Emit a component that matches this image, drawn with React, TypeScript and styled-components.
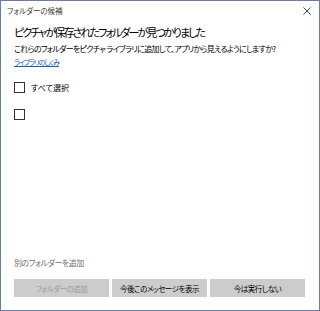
import React from "react";
import styled, { createGlobalStyle } from "styled-components";

const Global = createGlobalStyle`
  html, body { margin: 0; padding: 0; background: #ffffff; }
  body { font-family: "Noto Sans CJK JP", "Noto Sans", sans-serif; font-feature-settings: "palt" 1; }
  * { box-sizing: border-box; }
`;

const Window = styled.div`
  width: 320px;
  height: 311px;
  border: 1px solid #6a7da3;
  background: #ffffff;
  display: flex;
  flex-direction: column;
`;

const TitleBar = styled.div`
  height: 19px;
  display: flex;
  align-items: center;
  justify-content: space-between;
  padding: 0 8px 0 6px;
`;

const TitleText = styled.span`
  font-size: 7.5px;
  color: #3a3a3a;
  line-height: 1;
`;

const Content = styled.div`
  flex: 1;
  display: flex;
  flex-direction: column;
  padding: 4px 13px 13px 13px;
`;

const Heading = styled.h1`
  margin: 0;
  font-size: 11px;
  font-weight: 400;
  line-height: 16px;
  color: #000000;
  letter-spacing: -1.9px;
  white-space: nowrap;
`;

const Sub = styled.p`
  margin: 3px 0 0 0;
  font-size: 8px;
  line-height: 12px;
  color: #000000;
  letter-spacing: -0.7px;
  white-space: nowrap;
`;

const Link = styled.a`
  margin-top: 1px;
  font-size: 7px;
  line-height: 12px;
  color: #1a5fb4;
  text-decoration: underline;
  letter-spacing: -1.1px;
  align-self: flex-start;
`;

const CheckRow = styled.label<{ $top: number }>`
  display: flex;
  align-items: center;
  gap: 6px;
  margin-top: ${(p) => p.$top}px;
  height: 11px;
  font-size: 8px;
  color: #000000;
`;

const Box = styled.span`
  width: 11px;
  height: 11px;
  border: 1.5px solid #333333;
  background: #ffffff;
  flex: none;
`;

const Spacer = styled.div`
  flex: 1;
`;

const AddLabel = styled.div`
  font-size: 8px;
  line-height: 12px;
  color: #6d6d6d;
  letter-spacing: -0.5px;
`;

const ButtonRow = styled.div`
  display: flex;
  gap: 3px;
  margin-top: 10px;
`;

const Button = styled.button<{ $disabled?: boolean }>`
  width: 95px;
  height: 18px;
  border: none;
  background: #cccccc;
  font-family: inherit;
  font-feature-settings: "palt" 1;
  font-size: 7.5px;
  letter-spacing: -0.5px;
  white-space: nowrap;
  color: ${(p) => (p.$disabled ? "#9a9a9a" : "#000000")};
  padding: 0;
  display: flex;
  align-items: center;
  justify-content: center;
`;

export default function App() {
  return (
    <>
      <Global />
      <Window>
        <TitleBar>
          <TitleText>フォルダーの候補</TitleText>
          <svg width="8" height="8" viewBox="0 0 8 8">
            <path d="M0.5 0.5 L7.5 7.5 M7.5 0.5 L0.5 7.5" stroke="#333" strokeWidth="0.9" />
          </svg>
        </TitleBar>
        <Content>
          <Heading>ピクチャが保存されたフォルダーが見つかりました</Heading>
          <Sub>これらのフォルダーをピクチャ ライブラリに追加して、アプリから見えるようにしますか?</Sub>
          <Link>ライブラリのしくみ</Link>
          <CheckRow $top={14}>
            <Box />
            すべて選択
          </CheckRow>
          <CheckRow $top={16}>
            <Box />
          </CheckRow>
          <Spacer />
          <AddLabel>別のフォルダーを追加</AddLabel>
          <ButtonRow>
            <Button $disabled>フォルダーの追加</Button>
            <Button>今後このメッセージを表示</Button>
            <Button>今は実行しない</Button>
          </ButtonRow>
        </Content>
      </Window>
    </>
  );
}
